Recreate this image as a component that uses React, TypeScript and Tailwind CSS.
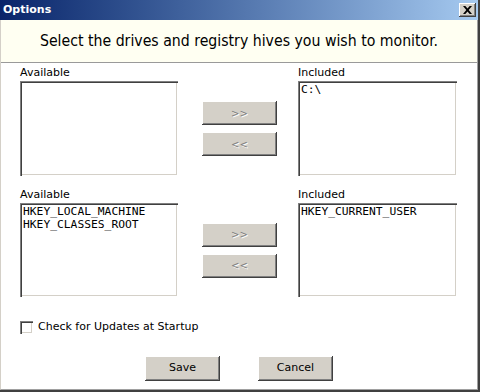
const ui = "font-['DejaVu_Sans',sans-serif]";
const head = "font-['DejaVu_Sans_Condensed','DejaVu_Sans',sans-serif] [font-stretch:condensed]";
const mono = "font-['DejaVu_Sans_Mono',monospace]";

const sunken =
  'bg-white shadow-[inset_1px_1px_0_#808080,inset_2px_2px_0_#404040,inset_-1px_-1px_0_#ffffff,inset_-2px_-2px_0_#d4d0c8]';
const raised =
  'bg-[#d4d0c8] shadow-[inset_-1px_-1px_0_#404040,inset_1px_1px_0_#ffffff,inset_-2px_-2px_0_#808080,inset_2px_2px_0_#d4d0c8]';

function ListBox({ items, height }: { items: string[]; height: number }) {
  return (
    <div className={`${sunken} pl-[3px] pt-[2px]`} style={{ height }}>
      {items.map((item) => (
        <div key={item} className={`${mono} text-[11.3px] leading-[13px] text-black`}>
          {item}
        </div>
      ))}
    </div>
  );
}

function MoveButton({ label }: { label: string }) {
  return (
    <div
      className={`${raised} ${ui} h-[24px] flex items-center justify-center text-[10px] text-[#808080] [text-shadow:1px_1px_0_#ffffff]`}
    >
      {label}
    </div>
  );
}

function Section({
  available,
  included,
  height
}: {
  available: string[];
  included: string[];
  height: number;
}) {
  return (
    <div className="flex">
      <div className="w-[158px] flex flex-col">
        <div className={`${ui} h-[15px] text-[11px] leading-[13px] text-black`}>Available</div>
        <ListBox items={available} height={height} />
      </div>
      <div className="ml-[24px] w-[75px] pt-[15px] flex flex-col justify-center gap-[7px]">
        <MoveButton label=">>" />
        <MoveButton label="<<" />
      </div>
      <div className="ml-[21px] w-[159px] flex flex-col">
        <div className={`${ui} h-[15px] text-[11px] leading-[13px] text-black`}>Included</div>
        <ListBox items={included} height={height} />
      </div>
    </div>
  );
}

export default function App() {
  return (
    <div className="w-[480px] h-[392px] flex flex-col bg-white border-r-2 border-b-2 border-[#404040] overflow-hidden">
      {/* title bar */}
      <div className="h-[20px] flex items-center justify-between bg-gradient-to-r from-[#0a246a] to-[#a6caf0] pl-[3px] pr-[2px]">
        <span className={`${ui} text-[11px] font-bold text-white`}>Options</span>
        <div className={`${raised} w-[17px] h-[14px] flex items-center justify-center`}>
          <svg width="9" height="8" viewBox="0 0 9 8">
            <path d="M0 0h2.3l2.2 2.6L6.7 0H9L5.7 4 9 8H6.7L4.5 5.4 2.3 8H0l3.3-4z" fill="#000" />
          </svg>
        </div>
      </div>

      <div className="flex-1 flex flex-col border-l border-[#d4d0c8] border-r border-r-[#a0a0a0] border-b border-b-[#a0a0a0]">
        {/* header */}
        <div className="h-[43px] bg-[#fffff2] border-b border-[#9a9a9a] flex items-center justify-center">
          <span className={`${head} text-[15.7px] text-black`}>
            Select the drives and registry hives you wish to monitor.
          </span>
        </div>

        <div className="pl-[19px] pt-[3px] flex flex-col">
          <Section available={[]} included={['C:\\']} height={95} />
          <div className="mt-[12px]">
            <Section
              available={['HKEY_LOCAL_MACHINE', 'HKEY_CLASSES_ROOT']}
              included={['HKEY_CURRENT_USER']}
              height={94}
            />
          </div>

          <label className="mt-[22px] flex items-center gap-[5px]">
            <div className={`${sunken} w-[13px] h-[13px]`} />
            <span className={`${ui} text-[11px] text-black`}>Check for Updates at Startup</span>
          </label>
        </div>

        <div className="mt-[20px] flex justify-center gap-[38px]">
          <div className={`${raised} ${ui} w-[75px] h-[25px] flex items-center justify-center text-[11px] text-black`}>
            Save
          </div>
          <div className={`${raised} ${ui} w-[75px] h-[25px] flex items-center justify-center text-[11px] text-black`}>
            Cancel
          </div>
        </div>
      </div>
    </div>
  );
}
